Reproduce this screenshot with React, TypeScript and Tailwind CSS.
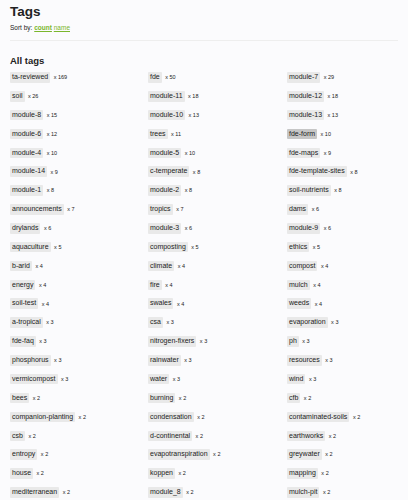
import React from "react";

type Tag = [string, number];

const tags: Tag[] = [
  ["ta-reviewed", 169], ["fde", 50], ["module-7", 29],
  ["soil", 26], ["module-11", 18], ["module-12", 18],
  ["module-8", 15], ["module-10", 13], ["module-13", 13],
  ["module-6", 12], ["trees", 11], ["fde-form", 10],
  ["module-4", 10], ["module-5", 10], ["fde-maps", 9],
  ["module-14", 9], ["c-temperate", 8], ["fde-template-sites", 8],
  ["module-1", 8], ["module-2", 8], ["soil-nutrients", 8],
  ["announcements", 7], ["tropics", 7], ["dams", 6],
  ["drylands", 6], ["module-3", 6], ["module-9", 6],
  ["aquaculture", 5], ["composting", 5], ["ethics", 5],
  ["b-arid", 4], ["climate", 4], ["compost", 4],
  ["energy", 4], ["fire", 4], ["mulch", 4],
  ["soil-test", 4], ["swales", 4], ["weeds", 4],
  ["a-tropical", 3], ["csa", 3], ["evaporation", 3],
  ["fde-faq", 3], ["nitrogen-fixers", 3], ["ph", 3],
  ["phosphorus", 3], ["rainwater", 3], ["resources", 3],
  ["vermicompost", 3], ["water", 3], ["wind", 3],
  ["bees", 2], ["burning", 2], ["cfb", 2],
  ["companion-planting", 2], ["condensation", 2], ["contaminated-soils", 2],
  ["csb", 2], ["d-continental", 2], ["earthworks", 2],
  ["entropy", 2], ["evapotranspiration", 2], ["greywater", 2],
  ["house", 2], ["koppen", 2], ["mapping", 2],
  ["mediterranean", 2], ["module_8", 2], ["mulch-pit", 2],
];

function TagItem({ name, count }: { name: string; count: number }) {
  const hovered = name === "fde-form";
  return (
    <div className="flex items-center h-[18.86px]">
      <span
        className={`px-[2px] h-[10.5px] leading-[10.5px] text-[7px] text-[#222] rounded-[1px] ${
          hovered ? "bg-[#c6c6c6]" : "bg-[#e9e9e9]"
        }`}
      >
        {name}
      </span>
      <span className="ml-[3.5px] text-[5.5px] text-[#222]">x {count}</span>
    </div>
  );
}

export default function App() {
  return (
    <div
      className="min-h-[500px] bg-[#fbfbfd] px-[10px] text-[#222]"
      style={{ fontFamily: '"Liberation Sans", Arial, sans-serif' }}
    >
      <h1 className="pt-[4px] text-[13.5px] leading-[16px] font-bold">Tags</h1>
      <div className="mt-[3px] text-[6.5px] leading-[9px]">
        Sort by:{" "}
        <a className="text-[#7ab62c] font-bold underline underline-offset-[1px]">count</a>{" "}
        <a className="text-[#7ab62c] underline underline-offset-[1px]">name</a>
      </div>
      <div className="mt-[8px] h-px bg-[#eeeeee]" />
      <h2 className="mt-[14px] text-[9.5px] leading-[12px] font-bold">All tags</h2>
      <div className="mt-[1px] grid grid-cols-[138px_139px_1fr]">
        {tags.map(([n, c]) => (
          <TagItem key={n} name={n} count={c} />
        ))}
      </div>
    </div>
  );
}
